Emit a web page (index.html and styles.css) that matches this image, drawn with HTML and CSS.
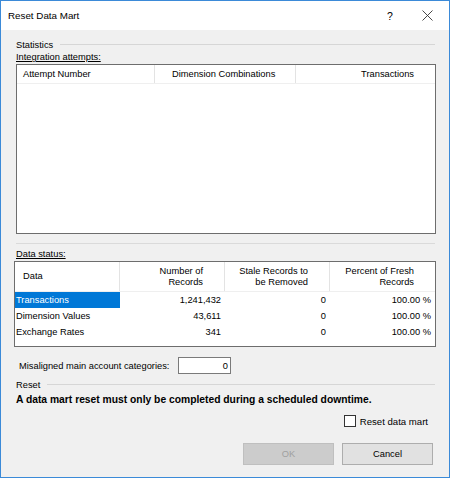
FILE: index.html
```html
<!DOCTYPE html>
<html>
<head>
<meta charset="utf-8">
<link rel="stylesheet" href="styles.css">
</head>
<body>
<div class="window">
  <div class="titlebar">
    <span class="title">Reset Data Mart</span>
    <span class="help">?</span>
    <span class="close"><svg width="11" height="11" viewBox="0 0 11 11"><path d="M0.5 0.5 L10.5 10.5 M10.5 0.5 L0.5 10.5" stroke="#333" stroke-width="0.9" fill="none"/></svg></span>
  </div>
  <div class="content">
    <div class="group-head"><span>Statistics</span><span class="rule"></span></div>
    <div class="caption"><u>Integration attempts:</u></div>
    <div class="listview attempts">
      <div class="lv-head">
        <div class="hcell c1">Attempt Number</div>
        <div class="hcell c2">Dimension Combinations</div>
        <div class="hcell c3 right">Transactions</div>
      </div>
    </div>
    <div class="divider"></div>
    <div class="caption"><u>Data status:</u></div>
    <div class="listview status">
      <div class="lv-head tall">
        <div class="hcell s1">Data</div>
        <div class="hcell s2 right">Number of<br>Records</div>
        <div class="hcell s3 right">Stale Records to<br>be Removed</div>
        <div class="hcell s4 right">Percent of Fresh<br>Records</div>
      </div>
      <div class="lv-row">
        <div class="cell s1"><span class="selected">Transactions</span></div>
        <div class="cell s2 num">1,241,432</div>
        <div class="cell s3 num">0</div>
        <div class="cell s4 num">100.00 %</div>
      </div>
      <div class="lv-row">
        <div class="cell s1 plain">Dimension Values</div>
        <div class="cell s2 num">43,611</div>
        <div class="cell s3 num">0</div>
        <div class="cell s4 num">100.00 %</div>
      </div>
      <div class="lv-row">
        <div class="cell s1 plain">Exchange Rates</div>
        <div class="cell s2 num">341</div>
        <div class="cell s3 num">0</div>
        <div class="cell s4 num">100.00 %</div>
      </div>
    </div>
    <div class="field-row">
      <span class="field-label">Misaligned main account categories:</span>
      <span class="textbox">0</span>
    </div>
    <div class="group-head reset"><span>Reset</span><span class="rule"></span></div>
    <div class="warning">A data mart reset must only be completed during a scheduled downtime.</div>
    <div class="check-row">
      <span class="checkbox"></span>
      <span class="check-label">Reset data mart</span>
    </div>
    <div class="buttons">
      <span class="btn disabled">OK</span>
      <span class="btn">Cancel</span>
    </div>
  </div>
</div>
</body>
</html>
```
FILE: styles.css
```css
* { box-sizing: border-box; }
html, body { margin: 0; padding: 0; background: #ffffff; }
body {
  font-family: "Liberation Sans", Arial, sans-serif;
  font-size: 9.3px;
  color: #000;
}
.window {
  width: 450px;
  height: 478px;
  border: 1px solid #3b8ad8;
  display: flex;
  flex-direction: column;
  background: #f0f0f0;
}
.titlebar {
  height: 29px;
  background: #fff;
  display: flex;
  align-items: center;
  padding-left: 7px;
}
.title { font-size: 9.8px; flex: 1; }
.help { font-size: 10.5px; width: 12px; margin-right: 23px; }
.close { width: 11px; height: 11px; margin-right: 16px; display: flex; }
.content {
  flex: 1;
  padding: 9px 14px 0 15px;
  display: flex;
  flex-direction: column;
}
.group-head {
  display: flex;
  align-items: center;
  height: 12px;
  line-height: 12px;
}
.group-head .rule {
  flex: 1;
  height: 1px;
  background: #d6d6d6;
  margin-left: 7px;
  margin-top: -1px;
}
.caption { height: 12px; line-height: 12px; margin-bottom: 1px; }
.caption u { text-decoration-thickness: 1px; text-underline-offset: 1px; }
.listview {
  background: #fff;
  border: 1px solid #6d6d6d;
  width: 420px;
}
.attempts { height: 170px; }
.lv-head {
  display: flex;
  height: 19px;
  border-bottom: 1px solid #efefef;
}
.hcell {
  border-right: 1px solid #e3e3e3;
  padding: 0 6px;
  display: flex;
  align-items: center;
  line-height: 11px;
}
.hcell.right { justify-content: flex-end; text-align: right; padding-right: 21px; }
.c1 { width: 138px; }
.c2 { width: 141px; padding-left: 17px; }
.c3 { flex: 1; border-right: none; }
.divider {
  height: 1px;
  background: #dadada;
  margin: 9px 0 4px 0;
}
.status { height: 86px; margin-left: -2px; width: 422px; }
.lv-head.tall { height: 30px; }
.s1 { width: 105px; }
.s2 { width: 105px; }
.s3 { width: 105px; }
.s4 { flex: 1; border-right: none; }
.hcell.s1 { padding-left: 8px; }
.hcell.s4 { padding-right: 21px; }
.lv-row { display: flex; height: 16px; }
.cell { display: flex; align-items: center; white-space: nowrap; }
.cell.plain { padding-left: 1px; }
.selected {
  background: #0078d7;
  color: #fff;
  width: 105px;
  height: 16px;
  display: flex;
  align-items: center;
  padding-left: 1px;
}
.cell.num { justify-content: flex-end; padding-right: 4px; }
.field-row {
  display: flex;
  align-items: center;
  margin-top: 10px;
  padding-left: 3px;
  height: 17px;
}
.field-label { width: 159px; }
.textbox {
  width: 53px;
  height: 17px;
  background: #fff;
  border: 1px solid #7a7a7a;
  display: flex;
  align-items: center;
  justify-content: flex-end;
  padding-right: 2px;
}
.group-head.reset { margin-top: 5px; }
.warning {
  font-weight: bold;
  font-size: 10.3px;
  height: 14px;
  line-height: 14px;
  margin-top: 2px;
}
.check-row {
  display: flex;
  align-items: center;
  justify-content: flex-end;
  margin-top: 8px;
  padding-right: 7px;
  height: 12px;
}
.checkbox {
  width: 12px;
  height: 12px;
  border: 1px solid #333;
  background: #fff;
  margin-right: 4px;
}
.check-label { font-size: 9.6px; }
.buttons {
  display: flex;
  justify-content: flex-end;
  gap: 8px;
  margin-top: 16px;
  padding-right: 2px;
}
.btn {
  width: 91px;
  height: 22px;
  border: 1px solid #adadad;
  background: #e1e1e1;
  display: flex;
  align-items: center;
  justify-content: center;
}
.btn.disabled {
  background: #cccccc;
  border-color: #bfbfbf;
  color: #a0a0a0;
}
```
